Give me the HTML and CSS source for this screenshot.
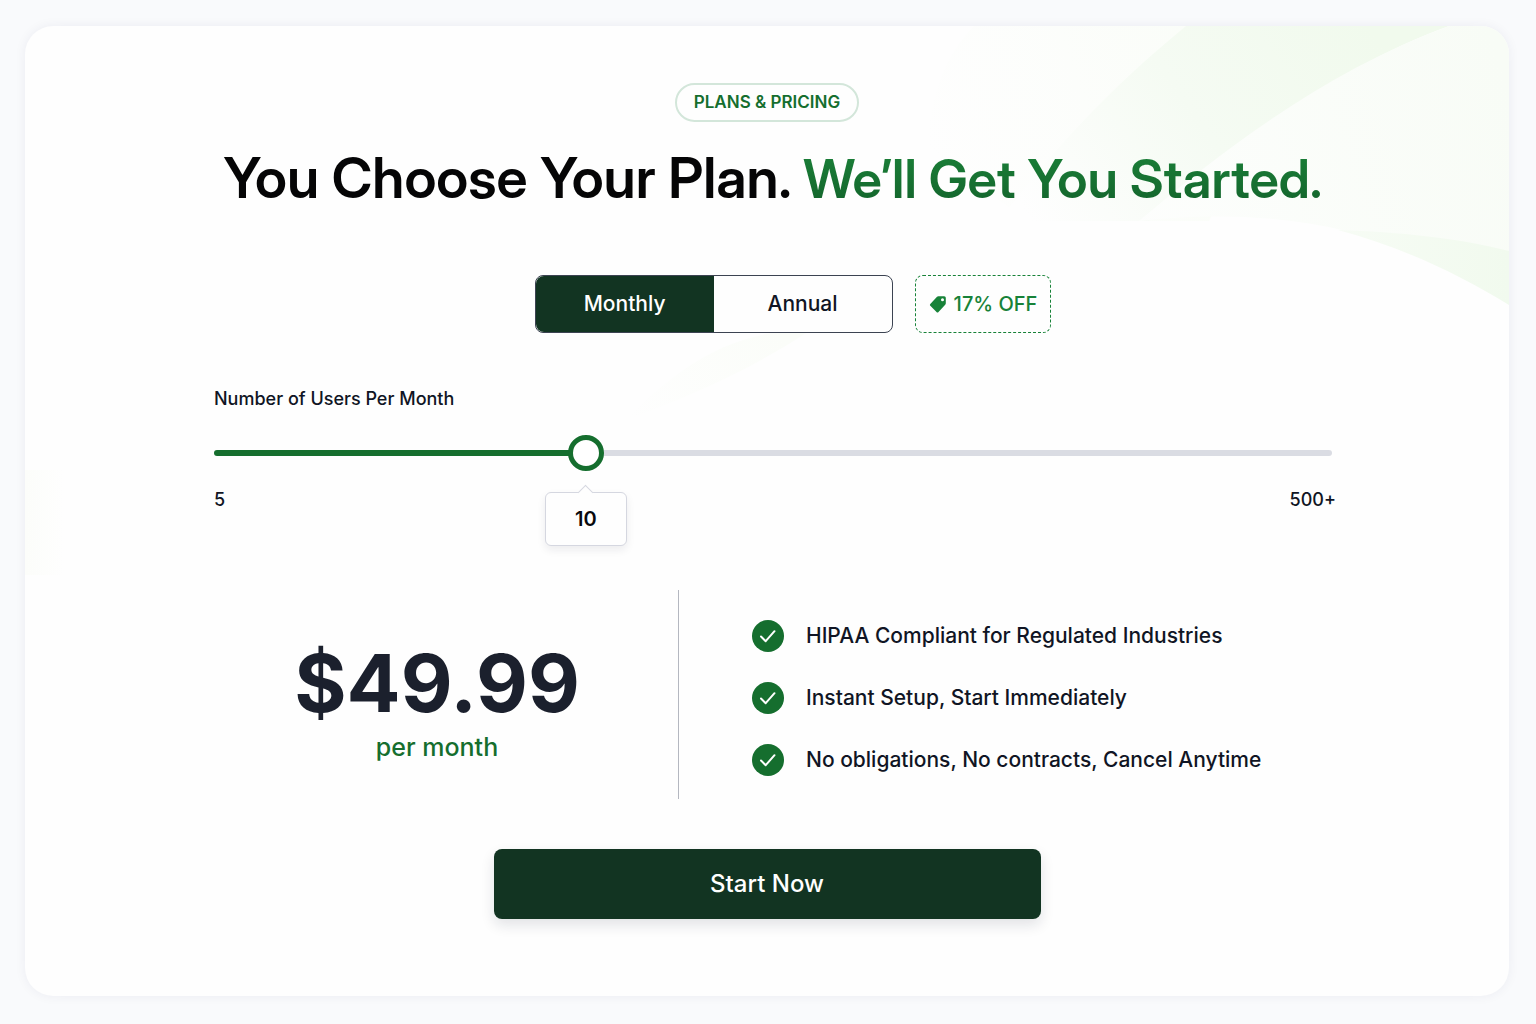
FILE: index.html
```html
<!DOCTYPE html>
<html lang="en">
<head>
  <meta charset="utf-8">
  <meta name="viewport" content="width=device-width, initial-scale=1">
  <title>Plans &amp; Pricing</title>
  <link rel="stylesheet" href="styles.css">
</head>
<body>
  <main class="card">
    <svg class="swoosh" viewBox="0 0 900 420" aria-hidden="true">
      <defs>
        <linearGradient id="band" gradientUnits="userSpaceOnUse" x1="760" y1="0" x2="440" y2="220">
          <stop offset="0" stop-color="#f1faed"/>
          <stop offset="0.5" stop-color="#f5fbf3"/>
          <stop offset="1" stop-color="#fefefe"/>
        </linearGradient>
        <linearGradient id="haze" gradientUnits="userSpaceOnUse" x1="620" y1="0" x2="310" y2="100">
          <stop offset="0" stop-color="#fafdf8"/>
          <stop offset="1" stop-color="#fefefe"/>
        </linearGradient>
        <linearGradient id="veil" gradientUnits="userSpaceOnUse" x1="900" y1="60" x2="500" y2="190">
          <stop offset="0" stop-color="#f8fcf6"/>
          <stop offset="1" stop-color="#fdfefd"/>
        </linearGradient>
        <linearGradient id="leaf" x1="1" y1="0" x2="0" y2="0">
          <stop offset="0" stop-color="#f1faee"/>
          <stop offset="1" stop-color="#f7fcf5"/>
        </linearGradient>
        <linearGradient id="trail" gradientUnits="userSpaceOnUse" x1="170" y1="305" x2="20" y2="395">
          <stop offset="0" stop-color="#fbfdf9"/>
          <stop offset="1" stop-color="#fefefe"/>
        </linearGradient>
      </defs>
      <path fill="url(#haze)" d="M365 0C335 30 322 70 318 120C350 150 400 180 420 195H600L700 0Z"/>
      <path fill="url(#band)" d="M577 0C510 55 450 115 390 195H540C640 110 730 40 840 0Z"/>
      <path fill="url(#veil)" d="M840 0C730 40 630 110 530 195C660 180 790 200 900 278V0Z"/>
      <path fill="url(#leaf)" d="M729 204C790 206 850 212 900 225V279C850 248 790 220 729 204Z"/>
      <path fill="url(#trail)" d="M180 305C110 310 60 350 15 395C80 370 140 345 200 305Z"/>
    </svg>

    <header class="intro">
      <p class="tag">PLANS &amp; PRICING</p>
      <h1 class="title">You Choose Your Plan. <span class="title-accent">We’ll Get You Started.</span></h1>
    </header>

    <form class="plan">
      <div class="billing">
        <fieldset class="toggle">
          <legend class="visually-hidden">Billing period</legend>
          <label class="toggle-option"><input class="toggle-input" type="radio" name="period" value="monthly" checked>Monthly</label>
          <label class="toggle-option"><input class="toggle-input" type="radio" name="period" value="annual">Annual</label>
        </fieldset>
        <p class="discount">
          <svg class="discount-icon" viewBox="0 0 18 18" aria-hidden="true">
            <path fill="currentColor" fill-rule="evenodd" d="M9.400 1.200H15.200Q16.800 1.200 16.800 2.800V8.200Q16.800 9 16.200 9.700L9.500 17Q8.500 18 7.500 17L1.300 10.800Q.400 9.900 1.300 8.900L8 1.800Q8.600 1.200 9.400 1.200ZM13.500 3.200A1.500 1.500 0 1 0 13.500 6.200A1.500 1.500 0 1 0 13.500 3.200Z"/>
          </svg>
          17% OFF
        </p>
      </div>

      <div class="users">
        <label class="users-label" for="users">Number of Users Per Month</label>
        <div class="slider" style="--pos: 0.327">
          <input class="slider-input" id="users" type="range" min="0" max="1000" value="327" aria-valuetext="10 users">
          <output class="slider-value" for="users">10</output>
        </div>
        <div class="scale"><span>5</span><span>500+</span></div>
      </div>

      <div class="summary">
        <div class="price">
          <strong class="price-amount">$49.99</strong>
          <span class="price-unit">per month</span>
        </div>
        <ul class="features">
          <li class="feature"><svg class="check" viewBox="0 0 32 32" aria-hidden="true"><circle cx="16" cy="16" r="16"/><path d="M9 16.500L13.700 21.200L22.500 11.200"/></svg>HIPAA Compliant for Regulated Industries</li>
          <li class="feature"><svg class="check" viewBox="0 0 32 32" aria-hidden="true"><circle cx="16" cy="16" r="16"/><path d="M9 16.500L13.700 21.200L22.500 11.200"/></svg>Instant Setup, Start Immediately</li>
          <li class="feature"><svg class="check" viewBox="0 0 32 32" aria-hidden="true"><circle cx="16" cy="16" r="16"/><path d="M9 16.500L13.700 21.200L22.500 11.200"/></svg>No obligations, No contracts, Cancel Anytime</li>
        </ul>
      </div>

      <button class="start" type="submit">Start Now</button>
    </form>
  </main>
</body>
</html>
```
FILE: styles.css
```css
:root {
  --green: #156e2e;
  --green-bright: #178238;
  --forest: #123422;
  --ink: #101524;
}

*,
*::before,
*::after {
  box-sizing: border-box;
}

body {
  margin: 0;
  min-height: 100vh;
  padding: 26px 27px 28px 25px;
  display: flex;
  background: #f9fafc;
  color: var(--ink);
  font-family: Inter, "Liberation Sans", sans-serif;
  font-weight: 500;
}

p,
h1,
ul,
fieldset {
  margin: 0;
  padding: 0;
}

.card {
  position: relative;
  flex: 1;
  min-width: 0;
  padding: 57px 24px 72px;
  display: flex;
  flex-direction: column;
  align-items: center;
  overflow: hidden;
  border-radius: 28px;
  background: linear-gradient(90deg, #fcfdfa, #fefefe) 0 444px / 40px 105px no-repeat #fefefe;
  box-shadow: 0 0 12px rgba(30, 40, 80, 0.06);
}

.swoosh {
  position: absolute;
  top: 0;
  right: 0;
  width: 900px;
  height: 420px;
}

.intro,
.plan {
  position: relative;
  width: 100%;
  display: flex;
  flex-direction: column;
  align-items: center;
}

.tag {
  padding: 0 17px;
  border: 2px solid #d3e6da;
  border-radius: 20px;
  background: #fefefe;
  color: var(--green);
  font-size: 17px;
  font-weight: 600;
  line-height: 35px;
}

.title {
  margin-top: 20px;
  padding-left: 12px;
  color: #050506;
  font-family: "Inter Display", Inter, "Liberation Sans", sans-serif;
  font-size: 56px;
  font-weight: 600;
  line-height: 72px;
  text-align: center;
}

.title-accent {
  color: var(--green);
  background: linear-gradient(#1b8239, #13622b);
  background-clip: text;
  -webkit-text-fill-color: transparent;
  font-size: 53px;
}

.plan {
  max-width: 1130px;
  margin-top: 60px;
  padding-left: 12px;
}

.billing {
  padding-left: 40px;
  display: flex;
  gap: 22px;
}

.toggle {
  width: 358px;
  display: flex;
  overflow: hidden;
  border: 1px solid #3c4352;
  border-radius: 8px;
  background: #fefefe;
}

.toggle-option {
  flex: 1 1 0;
  font-size: 21px;
  line-height: 56px;
  text-align: center;
  cursor: pointer;
}

.toggle-option:has(:checked) {
  background: var(--forest);
  color: #fff;
}

.toggle-option:has(:focus-visible) {
  outline: 2px solid var(--green-bright);
  outline-offset: -4px;
}

.toggle-input,
.visually-hidden {
  position: absolute;
  width: 1px;
  height: 1px;
  margin: 0;
  overflow: hidden;
  opacity: 0;
}

.discount {
  padding: 0 13px;
  display: flex;
  align-items: center;
  gap: 7px;
  border: 1px dashed var(--green-bright);
  border-radius: 8px;
  color: var(--green-bright);
  font-size: 20px;
}

.discount-icon {
  width: 18px;
  height: 18px;
}

.users {
  width: 100%;
  margin-top: 54px;
  font-size: 18px;
  line-height: 24px;
}

.users-label {
  display: block;
}

.slider {
  position: relative;
  margin-top: 24px;
  height: 36px;
}

.slider-input {
  display: block;
  width: 100%;
  height: 36px;
  margin: 0;
  appearance: none;
  background: transparent;
  cursor: pointer;
}

.slider-input::-webkit-slider-runnable-track {
  height: 6px;
  border-radius: 3px;
  background: linear-gradient(90deg, var(--green) calc(100% * var(--pos)), #dadce3 calc(100% * var(--pos)));
}

.slider-input::-webkit-slider-thumb {
  appearance: none;
  width: 36px;
  height: 36px;
  margin-top: -15px;
  border: 5px solid var(--green);
  border-radius: 50%;
  background: #fff;
}

.slider-value {
  position: absolute;
  top: 57px;
  left: calc(18px + (100% - 36px) * var(--pos));
  width: 82px;
  transform: translateX(-50%);
  border: 1px solid #d5d7e0;
  border-radius: 6px;
  background: #fefefe;
  box-shadow: 0 4px 8px rgba(20, 25, 50, 0.08);
  color: #08090d;
  font-size: 20px;
  font-weight: 600;
  line-height: 52px;
  text-align: center;
}

.slider-value::before {
  content: "";
  position: absolute;
  top: -6px;
  left: calc(50% - 6px);
  width: 11px;
  height: 11px;
  border: solid #d5d7e0;
  border-width: 1px 0 0 1px;
  background: #fefefe;
  transform: rotate(45deg);
}

.scale {
  margin: 17px -4px 0 0;
  display: flex;
  justify-content: space-between;
}

.summary {
  width: 100%;
  margin-top: 78px;
  display: grid;
  grid-template-columns: 465px 1fr;
}

.price {
  padding: 45px 18px 36px 0;
  display: flex;
  flex-direction: column;
  align-items: center;
  border-right: 1px solid #b4b7c0;
}

.price-amount {
  color: #1b202d;
  font-size: 80px;
  font-weight: 700;
  line-height: 96px;
}

.price-unit {
  color: var(--green);
  font-size: 25px;
  line-height: 32px;
}

.features {
  padding: 6px 0 0 73px;
  display: flex;
  flex-direction: column;
  justify-content: center;
  gap: 30px;
  list-style: none;
}

.feature {
  display: flex;
  align-items: center;
  gap: 22px;
  font-size: 21px;
  line-height: 32px;
}

.check {
  flex: none;
  width: 32px;
  height: 32px;
  fill: var(--green);
}

.check path {
  fill: none;
  stroke: #fff;
  stroke-width: 2;
  stroke-linecap: round;
  stroke-linejoin: round;
}

.start {
  width: 100%;
  max-width: 547px;
  margin: 50px 12px 0 0;
  padding: 0;
  border: 0;
  border-radius: 8px;
  background: var(--forest);
  box-shadow: 0 6px 14px rgba(20, 25, 50, 0.12);
  color: #fff;
  font: inherit;
  font-size: 24px;
  line-height: 70px;
  cursor: pointer;
}
```
